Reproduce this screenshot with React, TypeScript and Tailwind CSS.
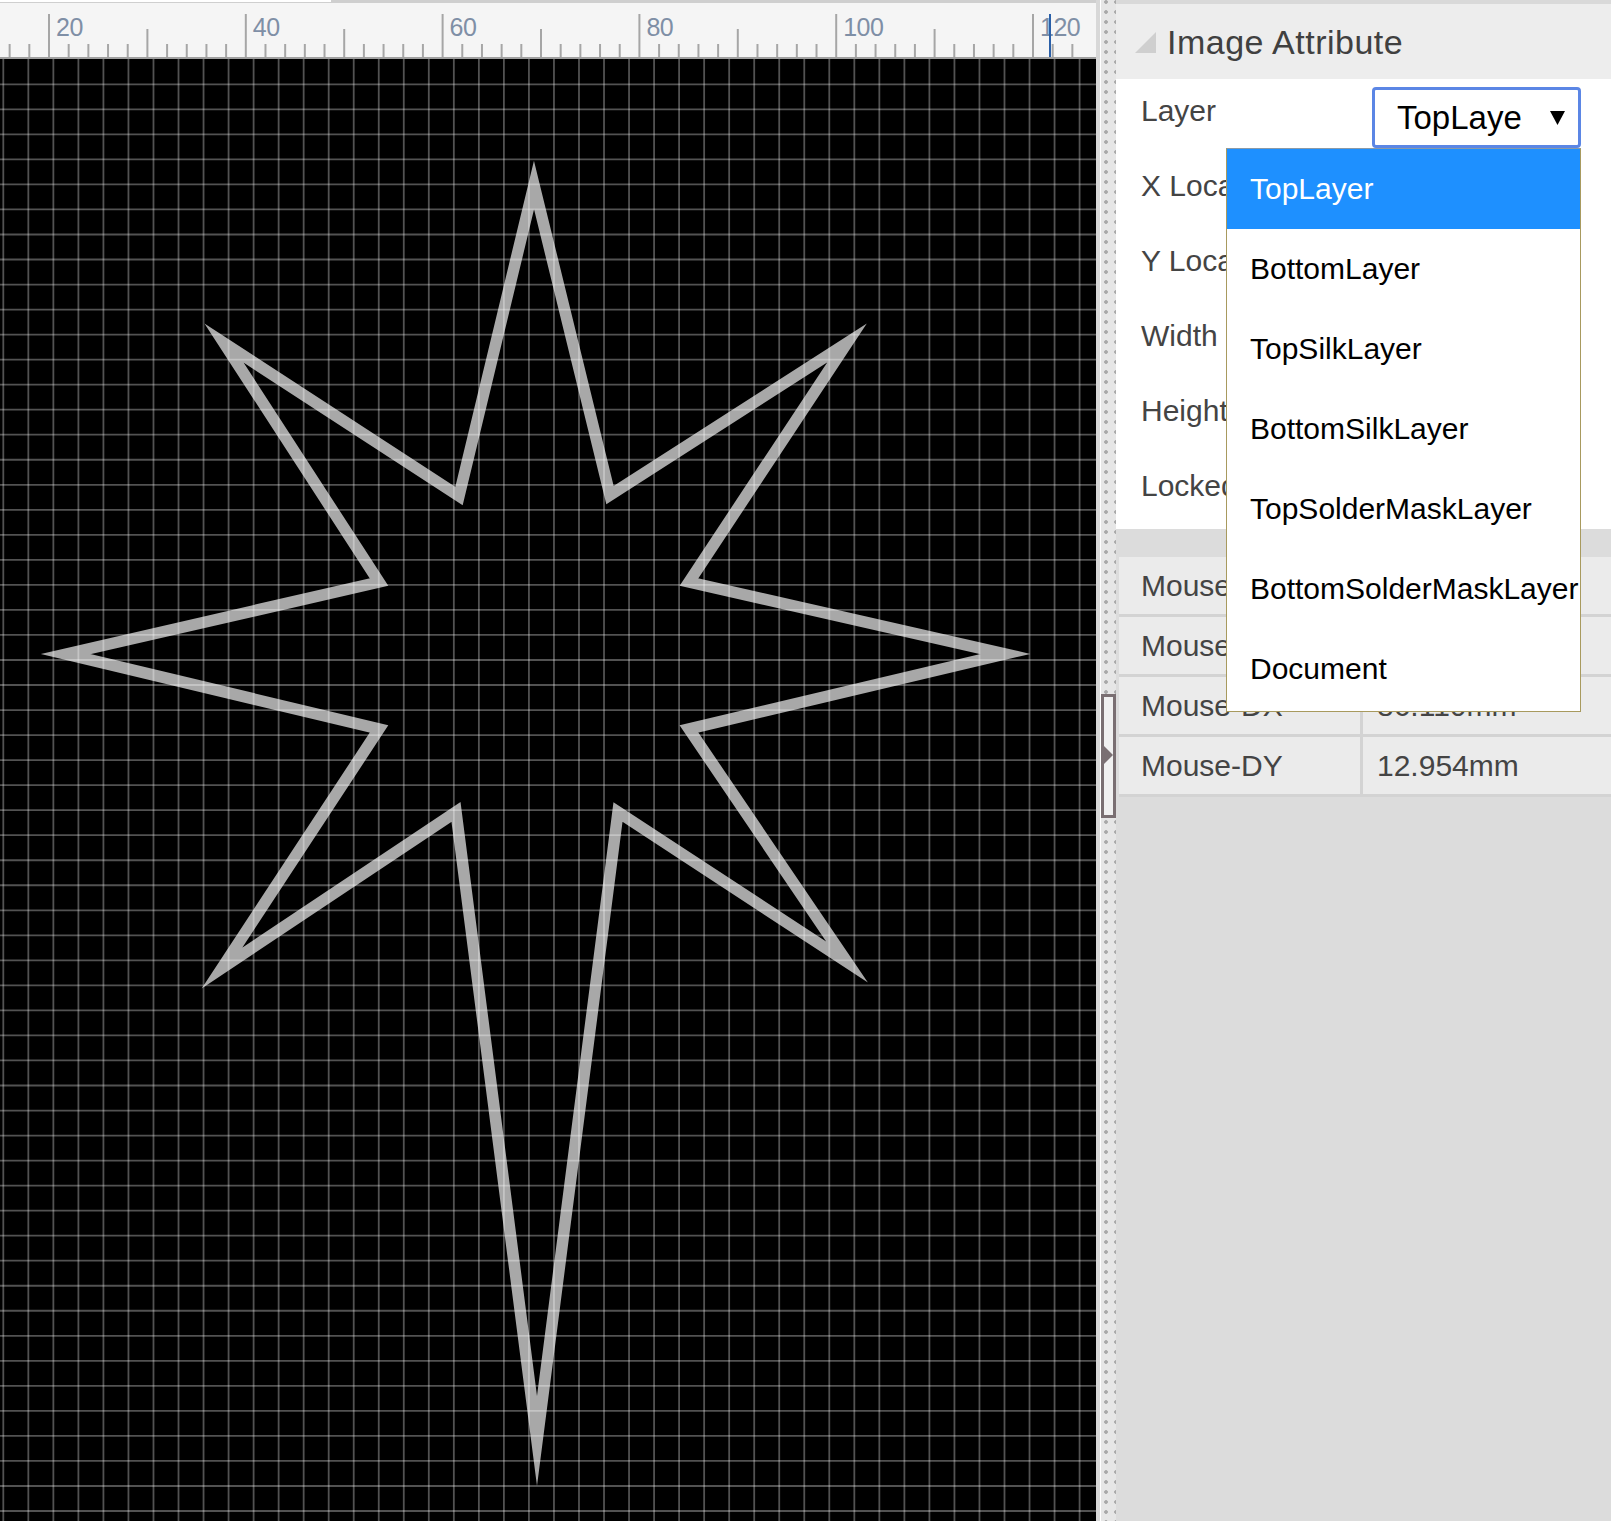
import React from "react";

const font = "[font-family:'Liberation_Sans',Arial,sans-serif]";

const starPoints =
  "534,185 610,495 847,343 689,582 1005,654 689,729 847,962 618,812 537,1441 456,812 222,968 379,729 66,654 379,582 224,343 459,496";

const layers = [
  "TopLayer",
  "BottomLayer",
  "TopSilkLayer",
  "BottomSilkLayer",
  "TopSolderMaskLayer",
  "BottomSolderMaskLayer",
  "Document",
];

const Ruler = () => {
  const ticks = Array.from({length: 55}, (_, i) => 9.64 + i * 19.68);
  return (
    <svg className="block w-full h-[54px]" viewBox="0 3 1096 54">
      {ticks.map((x, i) => {
        const top = i % 10 === 2 ? 14 : i % 10 === 7 ? 29 : 44;
        return <line key={i} x1={x} x2={x} y1={top} y2={57} stroke="#a6a6a6" strokeWidth={2}/>;
      })}
      {[20, 40, 60, 80, 100, 120].map((n, i) => (
        <text key={n} x={49 + i * 196.8 + 7} y={36} fontSize={25} letterSpacing={-0.5} fill="#7f8fa6" fontFamily="Liberation Sans, Arial, sans-serif">{n}</text>
      ))}
      <line x1={1050} x2={1050} y1={14} y2={57} stroke="#2a5fa8" strokeWidth={2}/>
    </svg>
  );
};

const Canvas = () => {
  const cols = Array.from({length: 44}, (_, i) => 3.3 + i * 25.03);
  const rows = Array.from({length: 59}, (_, i) => 84.3 + i * 25.03);
  return (
    <svg className="block w-full flex-1" viewBox="0 59 1096 1462">
      <polygon points={starPoints} fill="none" stroke="#a8a8a8" strokeWidth={11.5} strokeMiterlimit={12}/>
      {cols.map((x) => <line key={x} x1={x} x2={x} y1={59} y2={1521} stroke="#fff" strokeOpacity={0.32} strokeWidth={1.8}/>)}
      {rows.map((y) => <line key={y} x1={0} x2={1096} y1={y} y2={y} stroke="#fff" strokeOpacity={0.32} strokeWidth={1.8}/>)}
    </svg>
  );
};

const LayerSelect = () => (
  <div className="relative">
    <div className="flex items-center justify-between w-[209px] h-[61px] pl-[22px] pr-[13px] bg-white border-[3px] border-[#5b86e5] rounded-[4px] text-[33px] text-black">
      <span>TopLaye</span>
      <svg width="15" height="14" viewBox="0 0 15 14"><polygon points="0,0 15,0 7.5,14" fill="#000"/></svg>
    </div>
    <div className="absolute right-0 top-full z-10 w-[355px] pb-[2px] bg-white border border-[#a89a5e] border-t-[#8a9aa8]">
      {layers.map((name, i) => (
        <div key={name} className={`flex items-center h-[80px] pl-[23px] whitespace-nowrap text-[30px] ${i === 0 ? "bg-[#1e90ff] text-white" : "text-black"}`}>
          {name}
        </div>
      ))}
    </div>
  </div>
);

const mouseRows = [
  {label: "Mouse-X", value: ""},
  {label: "Mouse-Y", value: ""},
  {label: "Mouse-DX", value: "86.110mm"},
  {label: "Mouse-DY", value: "12.954mm"},
];

export default function App() {
  return (
    <div className={`flex w-[1616px] h-[1521px] overflow-hidden bg-white ${font}`}>
      <div className="flex flex-col w-[1096px] shrink-0 bg-black">
        <div className="flex h-[3px] bg-[#cfcfcf]">
          <div className="w-[331px] h-[2px] bg-white"/>
        </div>
        <div className="bg-[#f5f5f5] border-b-2 border-[#a0a0a0]">
          <Ruler/>
        </div>
        <Canvas/>
      </div>
      <div className="w-[4px] shrink-0 bg-[#d8d8d8]"/>
      <div className="relative w-[16px] shrink-0 border-l border-white bg-[#e6e6e6] bg-[radial-gradient(circle,#a8a8a8_1.5px,transparent_2.2px)] bg-[length:10px_10px] bg-[position:0_-3px]">
        <div className="absolute left-0 right-0 top-[694px] h-[124px] flex items-center bg-[#f0f0f0] border-[3px] border-[#7a6f72]">
          <svg width="10" height="20" viewBox="0 0 10 20" className="mt-[-2px]"><polygon points="0,0 10,10 0,20" fill="#7a6f72"/></svg>
        </div>
      </div>
      <div className="flex flex-col w-[495px] shrink-0 bg-[#dcdcdc] text-[#444]">
        <div className="flex items-center gap-[11px] h-[79px] pl-[19px] pt-[2px] bg-[#ededed] border-t-4 border-[#d9d9d9]">
          <svg width="21" height="21" viewBox="0 0 21 21"><polygon points="21,0 21,21 0,21" fill="#cfcfcf"/></svg>
          <span className="text-[34px] tracking-[0.5px] text-[#404040]">Image Attribute</span>
        </div>
        <div className="h-[450px] pt-[8px] bg-white text-[30px] leading-[36px]">
          <div className="flex items-start justify-between h-[61px] mb-[20px] pl-[25px] pr-[30px]">
            <span className="mt-[6px]">Layer</span>
            <LayerSelect/>
          </div>
          <div className="flex flex-col gap-[39px] pl-[25px]">
            <span>X Location</span>
            <span>Y Location</span>
            <span>Width</span>
            <span>Height</span>
            <span>Locked</span>
          </div>
        </div>
        <div className="mt-[28px] ml-[3px] text-[30px]">
          {mouseRows.map((row) => (
            <div key={row.label} className="grid grid-cols-[244px_1fr] h-[60px] bg-[#ebebeb] border-b-[3px] border-[#d3d3d3]">
              <div className="flex items-center pl-[22px] border-r-[3px] border-[#d3d3d3]">{row.label}</div>
              <div className="flex items-center pl-[14px]">{row.value}</div>
            </div>
          ))}
        </div>
      </div>
    </div>
  );
}
